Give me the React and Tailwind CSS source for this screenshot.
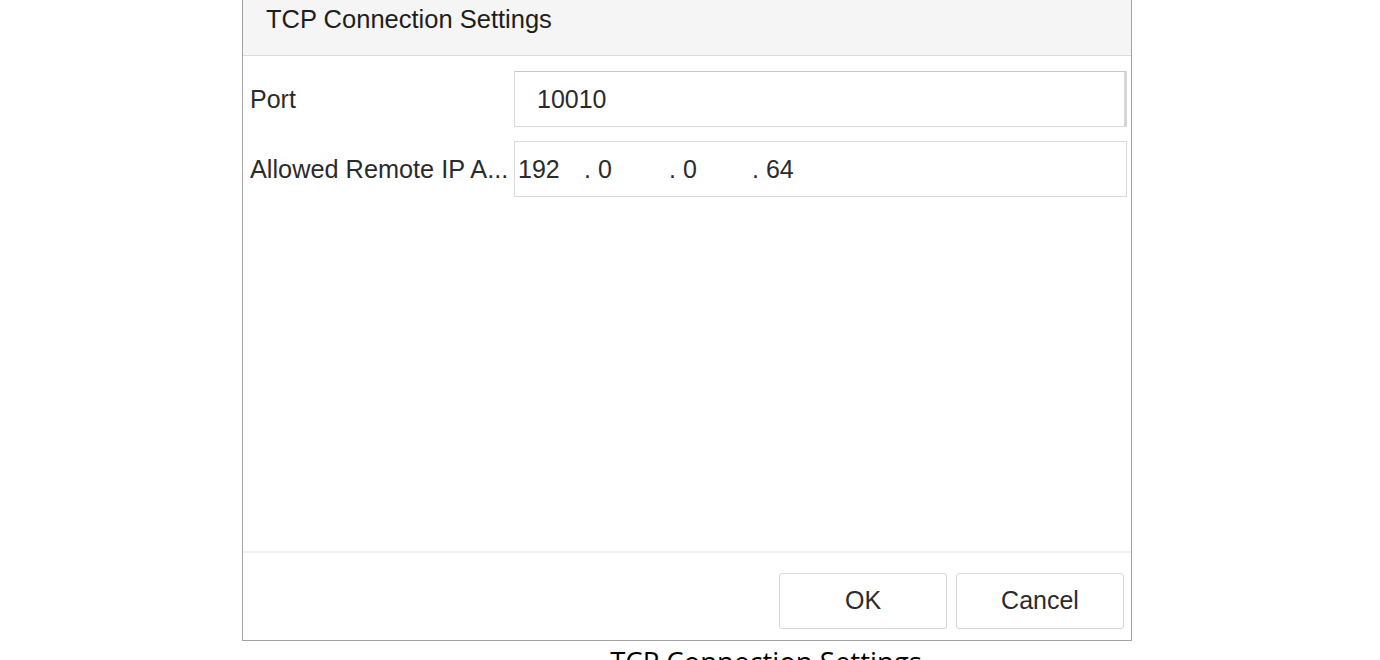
import React from "react";

export default function App() {
  const arial = { fontFamily: '"Liberation Sans", Arial, sans-serif' };
  return (
    <div className="w-[1380px] h-[660px] overflow-hidden bg-white relative">
      <div
        className="ml-[242px] w-[890px] h-[641px] border-l border-r border-b border-[#a3a3a3] flex flex-col text-[#2b2b2b]"
        style={arial}
      >
        <div className="h-[56px] shrink-0 bg-[#f5f5f5] border-b border-[#dcdcdc] pl-[23px] pt-[7px]">
          <span className="text-[25.5px] leading-[25px] text-[#1e1e1e]">TCP Connection Settings</span>
        </div>
        <div className="flex-1 flex flex-col pt-[15px] pr-[4px] gap-[14px]">
          <div className="flex items-center">
            <div className="w-[271px] pl-[7px] text-[25px] leading-[25px]">Port</div>
            <div className="w-[613px] h-[56px] border border-[#dadada] border-t-[#c8c8c8] border-t-dotted border-r-[3px] border-r-[#d6d6d6] flex items-center pl-[22px] text-[25px] leading-[25px]">
              10010
            </div>
          </div>
          <div className="flex items-center">
            <div className="w-[271px] pl-[7px] text-[25.3px] leading-[25px] whitespace-nowrap">Allowed Remote IP A...</div>
            <div className="w-[613px] h-[56px] border border-[#dadada] flex items-center pl-[3px] text-[25px] leading-[25px] whitespace-pre">
              <span className="w-[66px]">192</span>
              <span className="w-[85px]">{". 0"}</span>
              <span className="w-[83px]">{". 0"}</span>
              <span className="w-[84px]">{". 64"}</span>
            </div>
          </div>
        </div>
        <div className="h-[89px] shrink-0 border-t-2 border-[#f0f0f0] flex items-start justify-end gap-[9px] pr-[7px] pt-[20px]">
          <button className="w-[168px] h-[56px] border border-[#d6d6d6] rounded-[3px] bg-white text-[25px] text-[#2b2b2b]">
            OK
          </button>
          <button className="w-[168px] h-[56px] border border-[#d6d6d6] rounded-[3px] bg-white text-[25px] text-[#2b2b2b]">
            Cancel
          </button>
        </div>
      </div>
      <div className="w-[1380px] flex justify-center pl-[152px] pt-[7px]">
        <span className="text-[27.5px] leading-[27px] text-black whitespace-nowrap" style={{ fontFamily: '"Open Sans", "Noto Sans", sans-serif' }}>
          TCP Connection Settings
        </span>
      </div>
    </div>
  );
}
